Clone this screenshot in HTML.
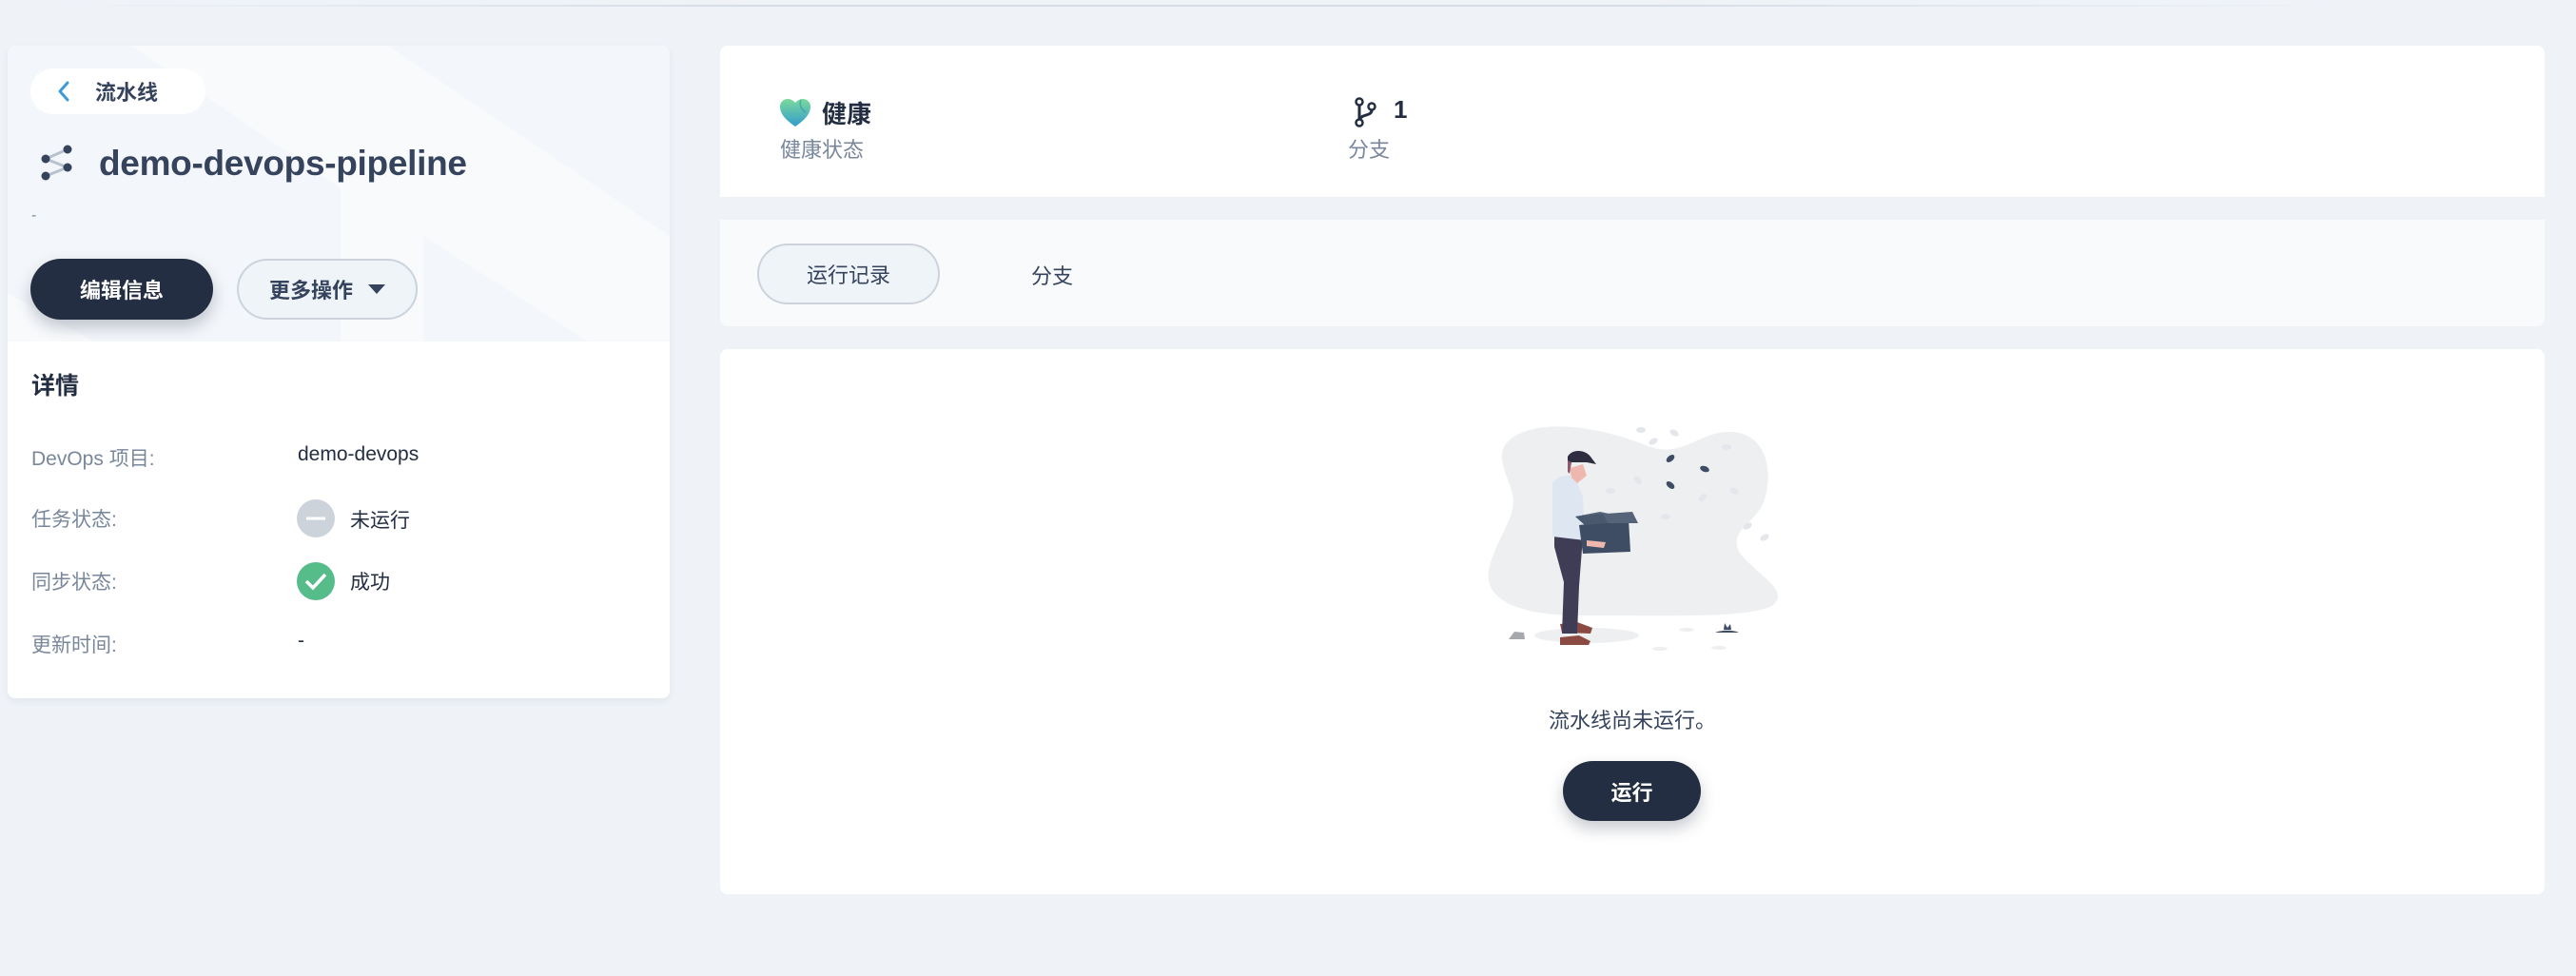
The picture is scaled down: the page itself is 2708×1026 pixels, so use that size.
<!DOCTYPE html>
<html><head><meta charset="utf-8"><style>
*{box-sizing:border-box;margin:0;padding:0}
body{width:2708px;height:1026px;background:#eff3f8;font-family:"Liberation Sans","Noto Sans CJK SC",sans-serif;color:#242e42;position:relative;overflow:hidden}
.abs{position:absolute}
.topline{left:60px;top:5px;width:2400px;height:2px;background:linear-gradient(90deg,rgba(210,218,228,0),#d6dde6 30%,#d6dde6 70%,rgba(210,218,228,0))}
.left{left:8px;top:48px;width:696px;height:686px;background:#fff;border-radius:8px;box-shadow:0 4px 8px rgba(36,46,66,.06);overflow:hidden}
.hdr{left:0;top:0;width:696px;height:311px;background:#f3f6fa;overflow:hidden}
.pill{border-radius:40px;display:flex;align-items:center;justify-content:center}
.lbl{left:25px;font-size:21px;color:#79879c}
.val{left:305px;font-size:21px;color:#242e42}
.card{background:#fff;border-radius:8px}
</style></head><body>
<div class="abs topline"></div>

<div class="abs left">
  <div class="abs hdr">
    <svg class="abs" style="left:0;top:0" width="696" height="311">
      <polygon points="240,0 400,0 696,200 696,311 600,311 437,200 437,311 350,311 350,150 130,0" fill="#f8fafc"/>
      <polygon points="0,260 90,311 0,311" fill="#f8fafc"/>
      <polygon points="437,200 610,311 437,311" fill="#f3f6fa"/>
    </svg>
    <div class="abs pill" style="left:24px;top:24px;width:184px;height:48px;background:#fff;justify-content:flex-start">
      <svg style="margin-left:28px" width="14" height="24" viewBox="0 0 14 24"><path d="M11 3 L3 12 L11 21" stroke="#3a9bd8" stroke-width="3" fill="none" stroke-linecap="round" stroke-linejoin="round"/></svg>
      <span style="margin-left:26px;font-size:22px;font-weight:bold;color:#36435c">流水线</span>
    </div>
    <svg class="abs" style="left:32px;top:100px" width="40" height="44" viewBox="0 0 40 44">
      <path d="M8 19 L31 9 M8 19 L31 28 M8 37 L31 28" stroke="#b8c2ce" stroke-width="3"/>
      <circle cx="8" cy="19" r="4.5" fill="#36435c"/><circle cx="31" cy="9" r="4.5" fill="#36435c"/>
      <circle cx="31" cy="28" r="4.5" fill="#36435c"/><circle cx="8" cy="37" r="4.5" fill="#36435c"/>
    </svg>
    <div class="abs" style="left:96px;top:103px;font-size:37px;font-weight:bold;color:#36435c;letter-spacing:-0.3px">demo-devops-pipeline</div>
    <div class="abs" style="left:25px;top:170px;font-size:16px;color:#79879c">-</div>
    <div class="abs pill" style="left:24px;top:224px;width:192px;height:64px;background:#242e42;color:#fff;font-size:22px;font-weight:bold;box-shadow:0 8px 16px rgba(36,46,66,.25)">编辑信息</div>
    <div class="abs pill" style="left:241px;top:224px;width:190px;height:64px;background:#eff4f9;border:2px solid #ccd3db;color:#36435c;font-size:22px;font-weight:bold">更多操作<svg style="margin-left:16px" width="18" height="10"><path d="M0 0 H18 L9 10Z" fill="#36435c"/></svg></div>
  </div>
  <div class="abs" style="left:25px;top:338px;font-size:25px;font-weight:bold;color:#242e42">详情</div>
  <div class="abs lbl" style="top:418px">DevOps 项目:</div>
  <div class="abs val" style="top:418px">demo-devops</div>
  <div class="abs lbl" style="top:482px">任务状态:</div>
  <svg class="abs" style="left:304px;top:477px" width="40" height="40"><circle cx="20" cy="20" r="20" fill="#ccd3db"/><rect x="10" y="18.5" width="20" height="3" fill="#fff"/></svg>
  <div class="abs val" style="left:360px;top:483px">未运行</div>
  <div class="abs lbl" style="top:548px">同步状态:</div>
  <svg class="abs" style="left:304px;top:543px" width="40" height="40"><circle cx="20" cy="20" r="20" fill="#55bc8a"/><path d="M10 20 L17 27 L30 13" stroke="#fff" stroke-width="3.5" fill="none"/></svg>
  <div class="abs val" style="left:360px;top:548px">成功</div>
  <div class="abs lbl" style="top:614px">更新时间:</div>
  <div class="abs val" style="top:614px">-</div>
</div>

<div class="abs card" style="left:757px;top:48px;width:1918px;height:159px;border-radius:8px 8px 0 0">
  <svg class="abs" style="left:63px;top:56px" width="32" height="30" viewBox="0 0 32 30"><defs><linearGradient id="g" x1="0" y1="0" x2="0" y2="1"><stop offset="0" stop-color="#7bd99a"/><stop offset="1" stop-color="#329dce"/></linearGradient></defs><path d="M16 29 C6 22 0 16 0 8 C0 3 4 0 8 0 C12 0 14 2 16 4 C18 2 20 0 24 0 C28 0 32 3 32 8 C32 16 26 22 16 29Z" fill="url(#g)"/><path d="M22 1 C20 6 22 11 27 14" stroke="#2d8fb5" stroke-width="1.5" fill="none" opacity=".6"/></svg>
  <div class="abs" style="left:107px;top:52px;font-size:26px;font-weight:bold;color:#242e42">健康</div>
  <div class="abs" style="left:63px;top:92px;font-size:22px;color:#79879c">健康状态</div>
  <svg class="abs" style="left:667px;top:54px" width="24" height="32" viewBox="0 0 24 32"><circle cx="5" cy="5" r="3.5" stroke="#242e42" stroke-width="2.5" fill="none"/><circle cx="5" cy="27" r="3.5" stroke="#242e42" stroke-width="2.5" fill="none"/><circle cx="18" cy="10" r="3.5" stroke="#242e42" stroke-width="2.5" fill="none"/><path d="M5 9 V23 M18 14 C18 20 7 18 6 23" stroke="#242e42" stroke-width="3" fill="none"/></svg>
  <div class="abs" style="left:708px;top:52px;font-size:26px;font-weight:bold;color:#242e42">1</div>
  <div class="abs" style="left:660px;top:92px;font-size:22px;color:#79879c">分支</div>
</div>

<div class="abs" style="left:757px;top:231px;width:1918px;height:112px;background:#f8fafc;border-radius:0 0 8px 8px">
  <div class="abs pill" style="left:39px;top:25px;width:192px;height:64px;background:#eff4f9;border:2px solid #ccd3db;font-size:22px;color:#36435c">运行记录</div>
  <div class="abs" style="left:327px;top:42px;font-size:22px;color:#36435c">分支</div>
</div>

<div class="abs card" style="left:757px;top:367px;width:1918px;height:573px">
  <svg class="abs" style="left:803px;top:73px" width="320" height="250" viewBox="0 0 320 250">
    <path d="M30 20 C60 0 120 8 170 28 C210 44 225 12 262 14 C300 18 304 60 294 88 C284 112 258 116 268 140 C288 166 322 180 304 196 C282 210 200 207 100 207 C40 207 0 192 5 160 C10 130 36 102 30 80 C24 55 8 36 30 20Z" fill="#eeeff1"/>
    <ellipse cx="108" cy="228" rx="55" ry="8" fill="#eeeff1"/>
    <ellipse cx="213" cy="222" rx="8" ry="2" fill="#eeeff1"/>
    <ellipse cx="185" cy="242" rx="8" ry="2" fill="#eeeff1"/>
    <ellipse cx="247" cy="241" rx="8" ry="2" fill="#eeeff1"/>
    <path d="M26 232 L32 224 L42 225 L43 232Z" fill="#a5a8ad"/>
    <path d="M243 225 C250 222 262 222 268 225Z M252 222 L253 215 L256 220 L259 216 L260 222Z" fill="#3f4d64"/>
    <path d="M80 216 L98 214 L114 220 L112 226 L82 225Z" fill="#8b4b43"/>
    <path d="M80 230 L100 228 L112 234 L110 238 L80 238Z" fill="#8b4b43"/>
    <path d="M74 122 L104 124 L100 176 L98 226 L82 226 L84 172 L74 135Z" fill="#3f3d56"/>
    <path d="M72 68 C76 60 90 58 96 62 L104 82 L106 128 L72 124 Z" fill="#dde6f1"/>
    <path d="M90 52 L104 48 L108 60 L98 68 L92 62Z" fill="#efb8ae"/>
    <path d="M88 40 C92 32 106 32 112 40 L118 48 L108 46 L92 46 L90 54 L88 50Z" fill="#2f2e41"/>
    <path d="M88 44 L92 46 L90 58 L88 56Z" fill="#8a5a6e"/>
    <path d="M100 112 L152 106 L154 140 L104 142Z" fill="#3f4d64"/>
    <path d="M96 103 L122 98 L160 106 L130 110Z" fill="#566479"/>
    <path d="M96 103 L106 112 L130 110 L125 100Z" fill="#4a586e"/>
    <path d="M128 100 L156 98 L162 110 L132 110Z" fill="#566479"/>
    <path d="M108 128 L128 130 L126 136 L108 134Z" fill="#efb8ae"/>
    <g fill="#3f4d64"><ellipse cx="196" cy="42" rx="5" ry="3" transform="rotate(-40 196 42)"/><ellipse cx="232" cy="53" rx="5" ry="3" transform="rotate(20 232 53)"/><ellipse cx="196" cy="70" rx="5" ry="3" transform="rotate(40 196 70)"/></g>
    <g fill="#e3e6ea"><ellipse cx="165" cy="12" rx="5" ry="3"/><ellipse cx="200" cy="15" rx="5" ry="3" transform="rotate(30 200 15)"/><ellipse cx="178" cy="24" rx="5" ry="3" transform="rotate(-30 178 24)"/><ellipse cx="255" cy="30" rx="5" ry="3"/><ellipse cx="162" cy="65" rx="5" ry="3" transform="rotate(50 162 65)"/><ellipse cx="133" cy="76" rx="5" ry="3"/><ellipse cx="230" cy="83" rx="5" ry="3" transform="rotate(-40 230 83)"/><ellipse cx="263" cy="76" rx="5" ry="3" transform="rotate(30 263 76)"/><ellipse cx="191" cy="103" rx="5" ry="3"/><ellipse cx="277" cy="113" rx="5" ry="3" transform="rotate(-30 277 113)"/><ellipse cx="295" cy="125" rx="5" ry="3" transform="rotate(-30 295 125)"/></g>
  </svg>
  <div class="abs" style="left:0;width:1918px;top:373px;text-align:center;font-size:22px;color:#36435c">流水线尚未运行。</div>
  <div class="abs pill" style="left:886px;top:433px;width:145px;height:63px;background:#242e42;color:#fff;font-size:22px;font-weight:bold;box-shadow:0 8px 16px rgba(36,46,66,.25)">运行</div>
</div>
</body></html>
